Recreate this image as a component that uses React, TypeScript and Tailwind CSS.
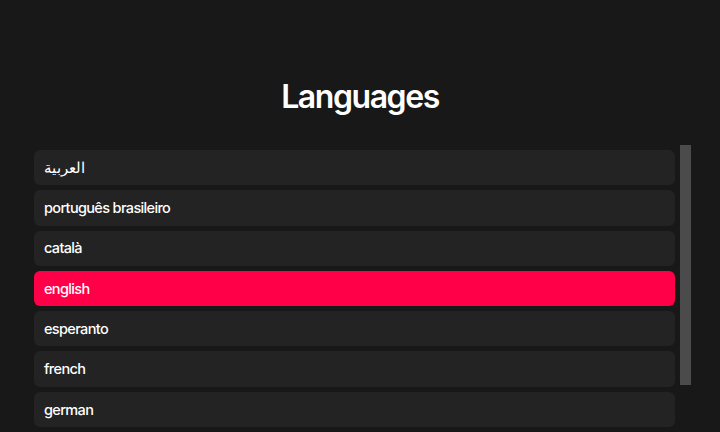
import { useState } from "react";

const languages = [
  "العربية",
  "português brasileiro",
  "català",
  "english",
  "esperanto",
  "french",
  "german",
  "italiano",
  "日本語",
];

const App = () => {
  const [selected, setSelected] = useState("english");

  return (
    <div
      className="h-[432px] w-full overflow-hidden bg-[#181818] text-white"
      style={{ fontFamily: "Inter, 'Noto Sans', 'Noto Sans CJK JP', sans-serif" }}
    >
      <h1 className="pt-[77px] text-center text-[32px] font-semibold leading-[40px] tracking-[-0.045em]">Languages</h1>

      <div className="mt-[28px] flex h-[287px] gap-[5px] pl-[34px] pr-[29px]">
        {/* list of languages */}
        <div className="flex flex-1 flex-col gap-[5px] overflow-hidden pt-[5px]">
          {languages.map((lang) => (
            <button
              key={lang}
              type="button"
              onClick={() => setSelected(lang)}
              className={`flex h-[35.3px] shrink-0 items-center rounded-md px-[10px] text-left text-[14.5px] font-medium tracking-[-0.045em] ${
                selected === lang ? "bg-[#ff0048]" : "bg-[#232323]"
              }`}
            >
              {lang}
            </button>
          ))}
        </div>

        {/* scrollbar */}
        <div className="w-[11px] shrink-0">
          <div className="h-[240px] bg-[#4b4b4b]" />
        </div>
      </div>
    </div>
  );
};

export default App;
